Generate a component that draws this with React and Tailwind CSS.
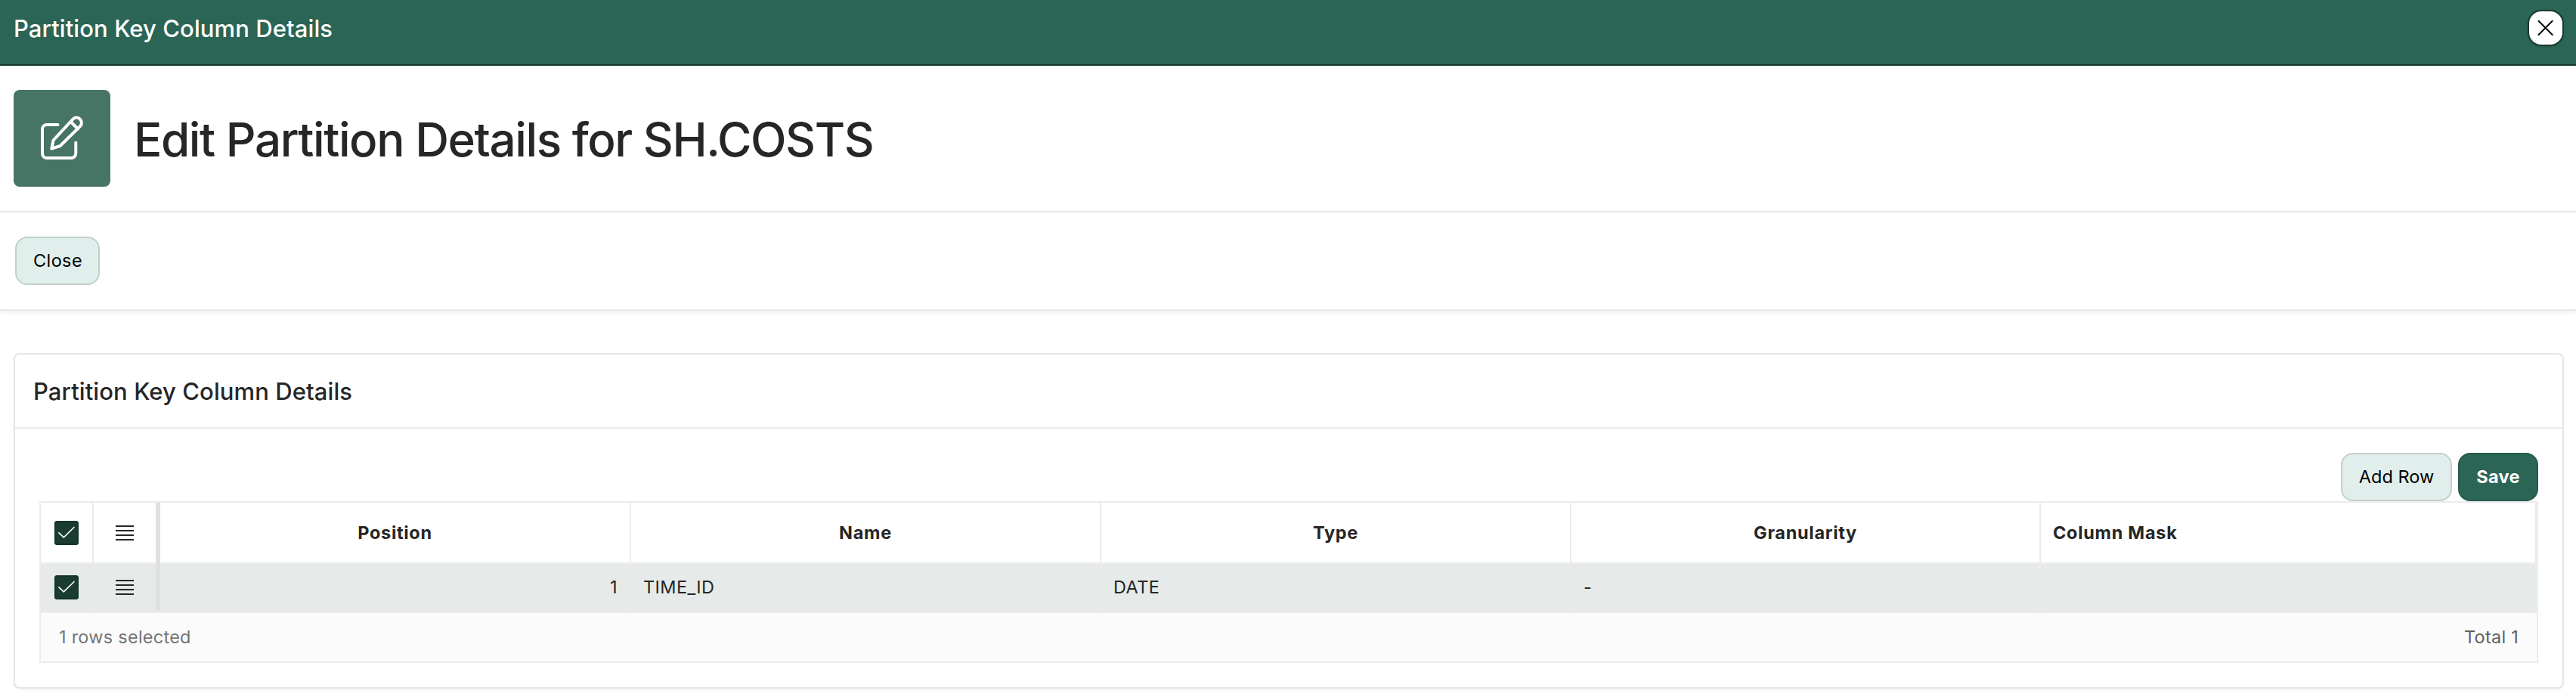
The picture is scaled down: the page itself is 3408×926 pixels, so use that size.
const COLUMNS = [
  { label: "Position", value: "1", head: "justify-center", cell: "justify-end" },
  { label: "Name", value: "TIME_ID", head: "justify-center", cell: "justify-start" },
  { label: "Type", value: "DATE", head: "justify-center", cell: "justify-start" },
  { label: "Granularity", value: "-", head: "justify-center", cell: "justify-start" },
  { label: "Column Mask", value: "", head: "justify-start", cell: "justify-start" },
];

const GRID = "grid grid-cols-[70px_88px_623px_622px_622px_621px_1fr]";

function EditIcon() {
  return (
    <svg
      className="size-16"
      viewBox="50 151 64 64"
      fill="none"
      stroke="white"
      strokeWidth="4"
      strokeLinecap="round"
      strokeLinejoin="round"
    >
      <path d="M76.5 165H62a6 6 0 0 0-6 6v32a6 6 0 0 0 6 6h32.3a6 6 0 0 0 6-6v-14.3" />
      <path d="M68.3 196.7l2.3-11.2 25.9-27.9a6.4 6.4 0 0 1 9.4 0 6.8 6.8 0 0 1 0 9.6L79.6 193z" />
      <path d="M94 161.5l9 9" />
    </svg>
  );
}

function CloseIcon() {
  return (
    <svg className="size-11" viewBox="0 0 44 44" fill="none" stroke="#0a0a0f" strokeWidth="2" strokeLinecap="round">
      <path d="M12.5 12.8l18.2 18.2M30.7 12.8L12.5 31" />
    </svg>
  );
}

function Checkbox() {
  return (
    <span className="flex size-8 items-center justify-center rounded-[4px] bg-[#1a3c32] inset-ring-2 inset-ring-[#15342a]">
      <svg
        className="size-8"
        viewBox="0 0 32 32"
        fill="none"
        stroke="white"
        strokeWidth="1.6"
        strokeLinecap="round"
        strokeLinejoin="round"
      >
        <path d="M5.9 15.9l6.4 6L26 8.5" />
      </svg>
    </span>
  );
}

function MenuLines() {
  return (
    <span className="flex w-6 flex-col gap-1">
      <span className="h-0.5 bg-[#262626]" />
      <span className="h-0.5 bg-[#262626]" />
      <span className="h-0.5 bg-[#262626]" />
      <span className="h-0.5 bg-[#262626]" />
    </span>
  );
}

export default function App() {
  return (
    <div className="flex h-[926px] w-full flex-col bg-white font-['Inter',sans-serif] text-[23.5px] tracking-[0.4px] text-[#262626]">
      <header className="flex h-[87px] shrink-0 items-start justify-between border-b-2 border-[#15362b] bg-[#2b6555] pr-[18px] pl-[18px]">
        <h2 className="text-[31px] leading-[76px] font-medium tracking-[0.09px] text-white">
          Partition Key Column Details
        </h2>
        <button className="mt-[15px] size-11 rounded-2xl bg-white shadow-[0_0_0_2px_#183a30,0_1px_4px_rgba(0,0,0,0.35)]">
          <CloseIcon />
        </button>
      </header>

      <section className="flex h-[194px] shrink-0 items-center gap-[31px] border-b-2 border-[#ebebeb] pb-0 pl-[18px]">
        <div className="flex size-32 items-center justify-center rounded-lg bg-[#477565]">
          <EditIcon />
        </div>
        <h1 className="mt-[3px] text-[62px] leading-[80px] font-medium tracking-[-1.42px]">
          Edit Partition Details for SH.COSTS
        </h1>
      </section>

      <section className="flex h-[130px] shrink-0 items-center border-b-2 border-[#ebebeb] pl-5 shadow-[0_2px_6px_rgba(0,0,0,0.08)]">
        <button className="h-16 w-28 rounded-2xl border-2 border-[#c2d0cc] bg-[#e0efeb] pl-px text-black">Close</button>
      </section>

      <main className="mx-4 mt-14 mr-4 ml-[18px] flex h-[444px] flex-col rounded-lg border-2 border-[#e5e5e5] bg-white shadow-[0_2px_4px_-1px_rgba(0,0,0,0.07)]">
        <h3 className="h-[98px] shrink-0 border-b-2 border-[#ebebeb] pl-6 text-[31px] leading-[97px] font-medium tracking-[0.09px]">
          Partition Key Column Details
        </h3>

        <div className="flex flex-col px-8 pt-8">
          <div className="flex justify-end gap-2">
            <button className="h-16 w-[147px] rounded-2xl border-2 border-[#c2d0cc] bg-[#e0efeb] tracking-normal text-black">
              Add Row
            </button>
            <button className="h-16 w-[106px] rounded-2xl border-2 border-[#275b4d] bg-[#2b6555] font-bold tracking-[0.3px] text-white">
              Save
            </button>
          </div>

          <div className="border-2 border-[#ebebeb]">
            <div className={`${GRID} h-[81px] font-bold tracking-[0.7px]`}>
              <div className="flex items-center justify-center border-r-2 border-b-2 border-[#ebebeb]">
                <Checkbox />
              </div>
              <div className="flex">
                <div className="flex flex-1 items-center justify-center border-b-2 border-[#ebebeb]">
                  <MenuLines />
                </div>
                <div className="w-1.5 bg-[#e0e0e0]" />
              </div>
              {COLUMNS.map((c) => (
                <div key={c.label} className={`flex items-center border-r-2 border-b-2 border-[#ebebeb] px-4 ${c.head}`}>
                  {c.label}
                </div>
              ))}
            </div>

            <div className={`${GRID} h-[62px] bg-[#e6ebe9]`}>
              <div className="flex items-center justify-center border-r-2 border-[#ebebeb]">
                <Checkbox />
              </div>
              <div className="flex">
                <div className="flex flex-1 items-center justify-center">
                  <MenuLines />
                </div>
                <div className="w-1.5 bg-[#e0e0e0]" />
              </div>
              {COLUMNS.map((c) => (
                <div key={c.label} className={`flex items-center border-r-2 border-[#ebebeb] px-4 ${c.cell}`}>
                  {c.value}
                </div>
              ))}
            </div>

            <div className="flex h-[67px] items-center justify-between border-t-3 border-[#ebebeb] bg-[#fbfbfb] px-6 tracking-[0.25px]">
              <span className="text-[#757575]">1 rows selected</span>
              <span className="text-[#5f5f5f]">Total 1</span>
            </div>
          </div>
        </div>
      </main>
    </div>
  );
}
